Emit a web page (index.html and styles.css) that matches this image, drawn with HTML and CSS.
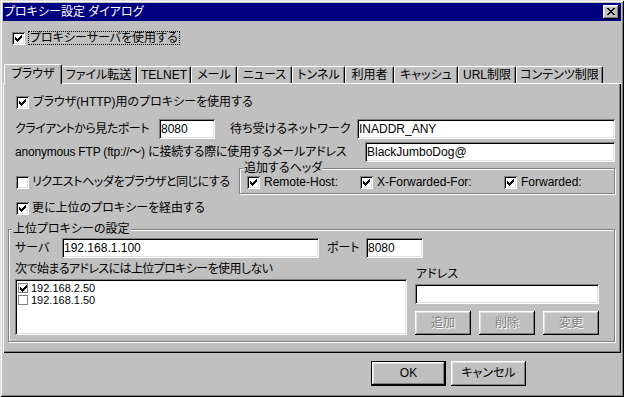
FILE: index.html
```html
<!DOCTYPE html>
<html lang="ja">
  <head>
    <meta charset="UTF-8" />
    <title>プロキシー設定 ダイアログ</title>
    <link rel="stylesheet" href="styles.css">
  </head>
  <body>
    <div class="window">
      <div class="titlebar">
        <span class="title">プロキシー設定 ダイアログ</span>
        <button class="close" aria-label="閉じる">
          <svg width="8" height="7" viewBox="0 0 8 7"><path d="M0 0h2v1H0zM6 0h2v1H6zM1 1h2v1H1zM5 1h2v1H5zM2 2h4v1H2zM3 3h2v1H3zM2 4h4v1H2zM1 5h2v1H1zM5 5h2v1H5zM0 6h2v1H0zM6 6h2v1H6z"/></svg>
        </button>
      </div>

      <label class="check use-proxy">
        <span class="cb"><svg width="7" height="7" viewBox="0 0 7 7"><path d="M0 2h1v3H0zM1 3h1v3H1zM2 4h1v3H2zM3 3h1v3H3zM4 2h1v3H4zM5 1h1v3H5zM6 0h1v3H6z"/></svg></span>
        <span class="focus">プロキシーサーバを使用する</span>
      </label>

      <div class="tabs">
        <div class="tab active">ブラウザ</div>
        <div class="tab">ファイル転送</div>
        <div class="tab">TELNET</div>
        <div class="tab">メール</div>
        <div class="tab">ニュース</div>
        <div class="tab">トンネル</div>
        <div class="tab">利用者</div>
        <div class="tab">キャッシュ</div>
        <div class="tab">URL制限</div>
        <div class="tab">コンテンツ制限</div>
      </div>

      <div class="panel">
        <label class="check use-http">
          <span class="cb"><svg width="7" height="7" viewBox="0 0 7 7"><path d="M0 2h1v3H0zM1 3h1v3H1zM2 4h1v3H2zM3 3h1v3H3zM4 2h1v3H4zM5 1h1v3H5zM6 0h1v3H6z"/></svg></span>
          ブラウザ(HTTP)用のプロキシーを使用する
        </label>

        <div class="row ports">
          <span class="lbl lbl-port">クライアントから見たポート</span>
          <input class="edit edit-port" type="text" value="8080">
          <span class="lbl lbl-net">待ち受けるネットワーク</span>
          <input class="edit grow" type="text" value="INADDR_ANY">
        </div>

        <div class="row ftp">
          <span class="lbl lbl-ftp">anonymous FTP (ftp://～) に接続する際に使用するメールアドレス</span>
          <input class="edit grow" type="text" value="BlackJumboDog@">
        </div>

        <div class="headers-row">
          <label class="check same-header">
            <span class="cb"></span>
            <span class="tight">リクエストヘッダをブラウザと同じにする</span>
          </label>
          <fieldset class="group header-group">
            <legend>追加するヘッダ</legend>
            <div class="header-list">
              <label class="check">
                <span class="cb"><svg width="7" height="7" viewBox="0 0 7 7"><path d="M0 2h1v3H0zM1 3h1v3H1zM2 4h1v3H2zM3 3h1v3H3zM4 2h1v3H4zM5 1h1v3H5zM6 0h1v3H6z"/></svg></span>
                Remote-Host:
              </label>
              <label class="check">
                <span class="cb"><svg width="7" height="7" viewBox="0 0 7 7"><path d="M0 2h1v3H0zM1 3h1v3H1zM2 4h1v3H2zM3 3h1v3H3zM4 2h1v3H4zM5 1h1v3H5zM6 0h1v3H6z"/></svg></span>
                X-Forwarded-For:
              </label>
              <label class="check">
                <span class="cb"><svg width="7" height="7" viewBox="0 0 7 7"><path d="M0 2h1v3H0zM1 3h1v3H1zM2 4h1v3H2zM3 3h1v3H3zM4 2h1v3H4zM5 1h1v3H5zM6 0h1v3H6z"/></svg></span>
                Forwarded:
              </label>
            </div>
          </fieldset>
        </div>

        <label class="check via-upper">
          <span class="cb"><svg width="7" height="7" viewBox="0 0 7 7"><path d="M0 2h1v3H0zM1 3h1v3H1zM2 4h1v3H2zM3 3h1v3H3zM4 2h1v3H4zM5 1h1v3H5zM6 0h1v3H6z"/></svg></span>
          更に上位のプロキシーを経由する
        </label>

        <fieldset class="group upstream">
          <legend>上位プロキシーの設定</legend>
          <div class="upstream-body">
            <div class="row">
              <span class="lbl lbl-server">サーバ</span>
              <input class="edit edit-server" type="text" value="192.168.1.100">
              <span class="lbl lbl-uport">ポート</span>
              <input class="edit edit-uport" type="text" value="8080">
            </div>

            <div class="bypass">
              <div class="bypass-left">
                <div class="lbl lbl-bypass">次で始まるアドレスには上位プロキシーを使用しない</div>
                <div class="listbox">
                  <div class="item">
                    <span class="mini-cb"><svg width="7" height="7" viewBox="0 0 7 7"><path d="M0 2h1v3H0zM1 3h1v3H1zM2 4h1v3H2zM3 3h1v3H3zM4 2h1v3H4zM5 1h1v3H5zM6 0h1v3H6z"/></svg></span>
                    192.168.2.50
                  </div>
                  <div class="item">
                    <span class="mini-cb"></span>
                    192.168.1.50
                  </div>
                </div>
              </div>
              <div class="bypass-right">
                <div class="lbl">アドレス</div>
                <input class="edit" type="text" value="">
                <div class="btn-row">
                  <button class="btn" disabled>追加</button>
                  <button class="btn" disabled>削除</button>
                  <button class="btn" disabled>変更</button>
                </div>
              </div>
            </div>
          </div>
        </fieldset>
      </div>

      <div class="footer">
        <button class="btn default">OK</button>
        <button class="btn">キャンセル</button>
      </div>
    </div>
  </body>
</html>
```

FILE: styles.css
```css
* {
  box-sizing: border-box;
}
body {
  margin: 0;
  background: #c0c0c0;
  font-family: "Liberation Sans", "Noto Sans CJK JP", sans-serif;
  font-size: 12px;
  line-height: 13px;
  color: #000;
  font-feature-settings: "palt";
}
.window {
  width: 624px;
  height: 397px;
  padding: 3px;
  display: flex;
  flex-direction: column;
  background: #c0c0c0;
  box-shadow: inset 1px 1px #dfdfdf, inset -1px -1px #000, inset 2px 2px #fff,
    inset -2px -2px #808080;
}
.titlebar {
  height: 18px;
  display: flex;
  align-items: center;
  justify-content: space-between;
  padding: 0 2px 0 1px;
  background: #000080;
  color: #fff;
}
.close {
  width: 16px;
  height: 14px;
  padding: 0 0 1px;
  border: 0;
  display: flex;
  align-items: center;
  justify-content: center;
  background: #c0c0c0;
  box-shadow: inset -1px -1px #000, inset 1px 1px #fff, inset -2px -2px #808080,
    inset 2px 2px #dfdfdf;
}
svg {
  display: block;
  shape-rendering: crispEdges;
}

/* checkboxes */
.check {
  display: flex;
  align-items: center;
  gap: 4px;
  height: 13px;
  white-space: nowrap;
}
.cb {
  width: 13px;
  height: 13px;
  flex: none;
  display: flex;
  align-items: center;
  justify-content: center;
  background: #fff;
  box-shadow: inset 1px 1px #808080, inset -1px -1px #fff, inset 2px 2px #000,
    inset -2px -2px #dfdfdf;
}
.use-proxy {
  height: 14px;
  margin: 10px 0 0 9px;
  align-items: flex-start;
  gap: 3px;
}
.use-proxy .cb {
  margin-top: 1px;
}
.focus {
  height: 14px;
  padding: 0 1px;
  border: 1px dotted #000;
  line-height: 12px;
}
.tight {
  letter-spacing: -0.4px;
}

/* tabs */
.tabs {
  height: 19px;
  margin-top: 19px;
  padding-left: 3px;
  display: flex;
  align-items: flex-end;
}
.tab {
  height: 17px;
  padding-top: 2px;
  border: 1px solid #fff;
  border-right-color: #000;
  border-bottom: 0;
  border-radius: 2px 2px 0 0;
  box-shadow: inset -1px 0 #808080;
  text-align: center;
  white-space: nowrap;
}
.tab.active {
  position: relative;
  z-index: 1;
  width: 58px;
  height: 20px;
  margin: 0 -2px -1px;
  padding-top: 3px;
  background: #c0c0c0;
}
.tab:nth-child(2) { width: 77px; }
.tab:nth-child(3) { width: 54px; }
.tab:nth-child(4) { width: 46px; }
.tab:nth-child(5) { width: 55px; }
.tab:nth-child(6) { width: 53px; }
.tab:nth-child(7) { width: 49px; }
.tab:nth-child(8) { width: 64px; }
.tab:nth-child(9) { width: 58px; }
.tab:nth-child(10) { width: 87px; }

.panel {
  height: 270px;
  padding: 13px 6px 0 12px;
  box-shadow: inset 1px 1px #fff, inset -1px -1px #000, inset -2px -2px #808080;
}
.use-http {
  margin-left: 1px;
}

/* rows */
.row {
  display: flex;
  align-items: center;
}
.lbl {
  flex: none;
  white-space: nowrap;
}
.ports {
  margin-top: 10px;
}
.ftp {
  margin-top: 3px;
}
.lbl-port {
  width: 144px;
  letter-spacing: -0.5px;
}
.edit-port {
  width: 56px;
}
.lbl-net {
  width: 127px;
  margin-left: 15px;
}
.lbl-ftp {
  width: 350px;
  letter-spacing: -0.2px;
}
.lbl-bypass {
  letter-spacing: -0.6px;
}
.grow {
  flex: 1;
  min-width: 0;
}
.edit {
  height: 20px;
  padding: 0 2px;
  border: 0;
  outline: none;
  font: inherit;
  color: #000;
  background: #fff;
  box-shadow: inset 1px 1px #808080, inset -1px -1px #fff, inset 2px 2px #000,
    inset -2px -2px #dfdfdf;
}

/* group boxes */
.group {
  margin: 0;
  padding: 0;
  min-width: 0;
  border: 1px solid #808080;
  box-shadow: inset 1px 1px #fff, 1px 1px #fff;
}
.group legend {
  margin-left: 3px;
  padding: 0 1px;
  line-height: 13px;
  background: #c0c0c0;
}
.headers-row {
  display: flex;
  align-items: flex-start;
}
.same-header {
  width: 223px;
  margin: 14px 0 0 1px;
  gap: 3px;
}
.header-group {
  flex: 1;
}
.header-list {
  display: grid;
  grid-template-columns: 113px 144px auto;
  padding: 1px 0 4px 7px;
}
.via-upper {
  margin: 8px 0 0 1px;
  gap: 3px;
}
.upstream {
  margin: 8px 0 0 -7px;
}
.upstream-body {
  padding: 2px 0 6px 6px;
}
.lbl-server {
  width: 47px;
}
.edit-server {
  width: 257px;
}
.lbl-uport {
  width: 39px;
  margin-left: 8px;
}
.edit-uport {
  width: 57px;
}
.bypass {
  display: flex;
  gap: 8px;
  margin-top: 5px;
}
.bypass-left {
  width: 392px;
}
.listbox {
  height: 56px;
  margin-top: 3px;
  padding: 3px 0 0 3px;
  background: #fff;
  box-shadow: inset 1px 1px #808080, inset -1px -1px #fff, inset 2px 2px #000,
    inset -2px -2px #dfdfdf;
}
.item {
  height: 12px;
  display: flex;
  align-items: center;
  gap: 3px;
  font-size: 11px;
  line-height: 12px;
}
.mini-cb {
  width: 10px;
  height: 10px;
  display: flex;
  align-items: center;
  justify-content: center;
  border: 1px solid #808080;
  background: #fff;
}
.bypass-right {
  width: 184px;
}
.bypass-right .lbl {
  margin-top: 5px;
  padding-left: 1px;
}
.bypass-right .edit {
  display: block;
  width: 100%;
  margin-top: 3px;
}
.btn-row {
  display: flex;
  gap: 8px;
  margin-top: 7px;
}
.btn-row .btn {
  width: 56px;
  height: 24px;
}

/* buttons */
.btn {
  padding: 0;
  border: 0;
  font: inherit;
  color: #000;
  background: #c0c0c0;
  box-shadow: inset -1px -1px #000, inset 1px 1px #fff, inset -2px -2px #808080,
    inset 2px 2px #dfdfdf;
}
.btn:disabled {
  color: #808080;
  text-shadow: 1px 1px #fff;
}
.btn.default {
  border: 1px solid #000;
}
.footer {
  display: flex;
  justify-content: flex-end;
  gap: 5px;
  padding: 8px 95px 0 0;
}
.footer .btn {
  width: 75px;
  height: 25px;
}
```
